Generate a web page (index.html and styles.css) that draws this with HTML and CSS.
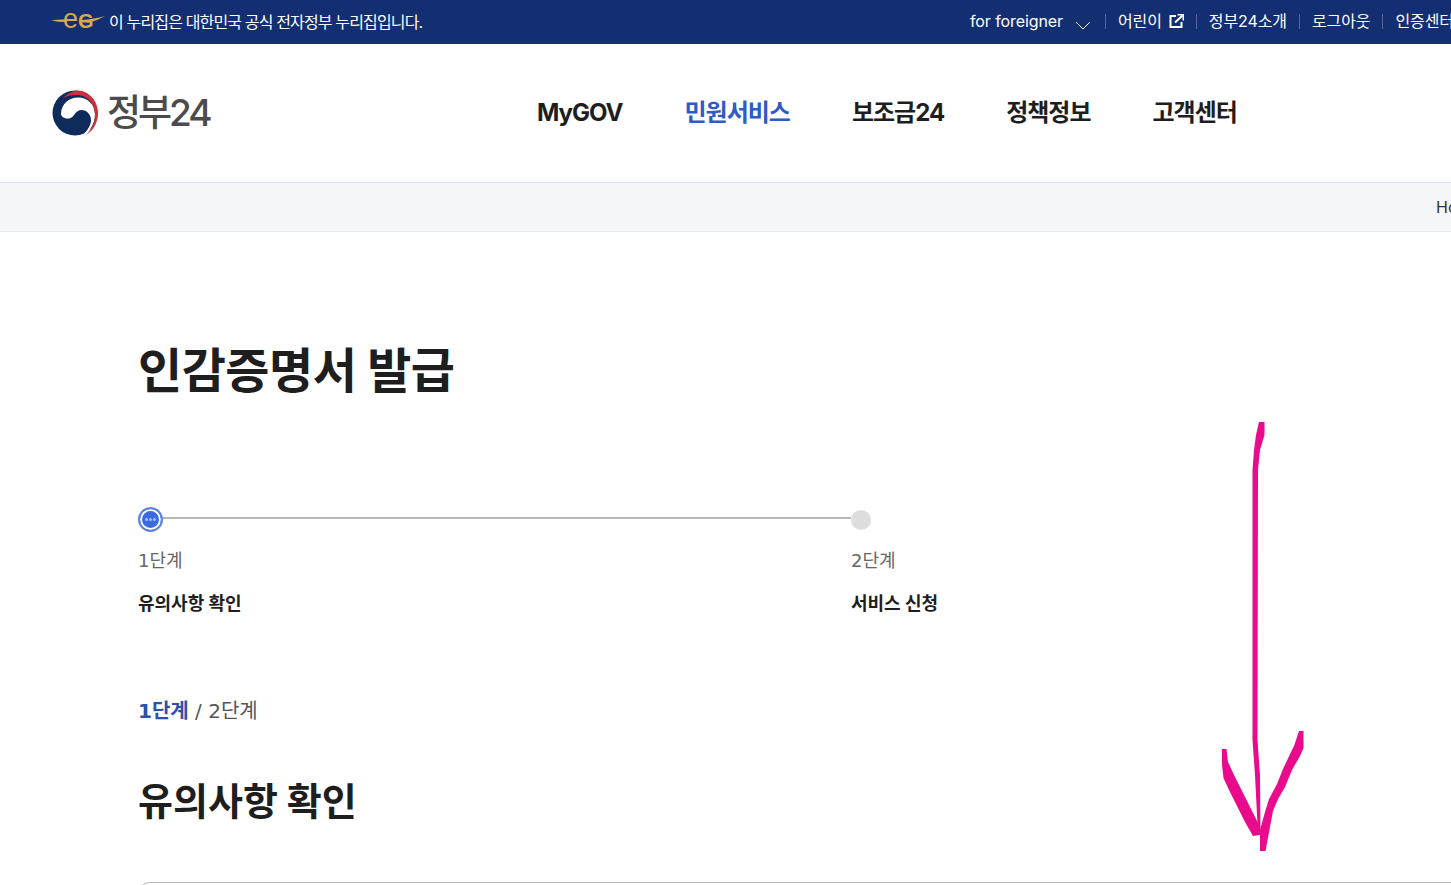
FILE: index.html
```html
<!DOCTYPE html>
<html lang="ko">
<head>
    <meta charset="UTF-8">
    <title>인감증명서 발급 | 정부24</title>
    <link rel="stylesheet" href="styles.css">
</head>
<body>
    <div class="top-bar">
        <div class="gov-notice">
            <svg class="eg-logo" width="54" height="20" viewBox="0 0 54 20">
                <path d="M0 9.500 Q8 8 16 8.500 L15 11 Q7 11 0 9.500Z" fill="#d8a94f"/>
                <path d="M30 9 Q44 8 54 5 Q46 10 38 11.500 L30 11.500Z" fill="#d8a94f"/>
                <text class="eg-text" x="12" y="17">e</text>
                <text class="eg-text eg-cap" x="27" y="17">G</text>
            </svg>
            <span>이 누리집은 대한민국 공식 전자정부 누리집입니다.</span>
        </div>
        <ul class="util-menu">
            <li class="foreigner">for foreigner
                <svg class="chevron" width="16" height="9" viewBox="0 0 16 9"><path d="M1 1l7 7 7-7" fill="none" stroke="#fff" stroke-width="1"/></svg>
            </li>
            <li>어린이
                <svg width="15" height="14" viewBox="0 0 15 14"><path d="M7 2H1.500v11h11V8" fill="none" stroke="#fff" stroke-width="2"/><path d="M6 8.500L13 2M8.500 .500h6v6" fill="none" stroke="#fff" stroke-width="2"/></svg>
            </li>
            <li>정부24소개</li>
            <li>로그아웃</li>
            <li>인증센터</li>
        </ul>
    </div>

    <header class="site-header">
        <a class="logo">
            <svg width="48" height="46" viewBox="0 0 48 46">
                <circle cx="24" cy="23" r="22.500" fill="#0f2b5b"/>
                <path d="M10 24C10 14 18 7.500 27 7.500 37 7.500 44 15 44 24 44 33 40 40 33 45L31 45.500C37 40 40 35 40 30 40 24 35 20 31 20 27 20 25 22 23 25 21 28 18 29 15 28.500 12 28 10 26 10 24Z" fill="#fff"/>
                <path d="M12 8C17 3 23 .5 27 .5 38 1 47 11 47 23 47 33 42 41 35 45 41 39 44 32 44 25 44 14 36 5 26 5 20 5 16 6 12 8Z" fill="#cd2e3a"/>
            </svg>
            <span class="logo-text">정부24</span>
        </a>
        <nav class="main-nav">
            <a>MyGOV</a>
            <a class="active">민원서비스</a>
            <a>보조금24</a>
            <a>정책정보</a>
            <a>고객센터</a>
        </nav>
    </header>

    <div class="breadcrumb">Home</div>

    <main class="content">
        <h1>인감증명서 발급</h1>

        <div class="steps">
            <div class="step">
                <div class="step-track">
                    <span class="dot current"><i></i><i></i><i></i></span>
                    <span class="track-line"></span>
                </div>
                <div class="step-num">1단계</div>
                <div class="step-name">유의사항 확인</div>
            </div>
            <div class="step">
                <div class="step-track">
                    <span class="dot"></span>
                </div>
                <div class="step-num">2단계</div>
                <div class="step-name">서비스 신청</div>
            </div>
        </div>

        <div class="step-count"><strong>1단계</strong> <span class="slash">/</span> 2단계</div>
        <h2>유의사항 확인</h2>
        <div class="notice-box"></div>
    </main>

    <!-- hand drawn marker arrow on top of the page -->
    <svg class="marker-arrow" width="1451" height="885" viewBox="0 0 1451 885">
        <path d="M1259 422H1264.500V435L1260 450 1258 470 1257.500 740 1260 775 1260.500 835H1258L1255 775 1252.500 740V470L1254 450 1256 435Z" fill="#ea0b8c"/>
        <path d="M1222 749H1226.500L1228 762 1234 775 1259 825V835L1253 836 1245 822 1229 790 1223.500 778 1222 765Z" fill="#ea0b8c"/>
        <path d="M1299 731h4.500v17l-3.500 8-8 14-7 17-7 12-5 12-3 16-4.500 24h-5.500v-21l5-18 4-13 8-15 6-15 8-17 3-6Z" fill="#ea0b8c"/>
    </svg>
</body>
</html>
```

FILE: styles.css
```css
* {
    box-sizing: border-box;
}
html, body {
    margin: 0;
    padding: 0;
    height: 885px;
    overflow: hidden;
}
body {
    position: relative;
    font-family: Inter, "Noto Sans CJK KR", sans-serif;
    color: #1e1e1e;
    background-color: #fff;
}
.top-bar {
    display: flex;
    align-items: center;
    height: 44px;
    padding: 0 0 2px 51px;
    background-color: #132f71;
    color: #fff;
    font-size: 16px;
    white-space: nowrap;
    overflow: hidden;
}
.gov-notice {
    display: flex;
    align-items: center;
    flex: 0 0 919px;
    gap: 4px;
    letter-spacing: -0.85px;
}
.eg-logo {
    flex: none;
    overflow: visible;
}
.eg-text {
    font-family: "Liberation Sans", sans-serif;
    font-size: 27px;
    letter-spacing: 0;
    fill: #d8a94f;
}
.eg-cap {
    font-size: 20px;
    font-weight: 700;
}
.util-menu {
    display: flex;
    align-items: center;
    flex: none;
    margin: 0;
    padding: 0;
    list-style: none;
    letter-spacing: -0.1px;
}
.util-menu li {
    display: flex;
    align-items: center;
    gap: 7px;
    padding: 0 12px;
    border-left: 1px solid #54689b;
    line-height: 15px;
}
.util-menu li.foreigner {
    gap: 12px;
    padding-left: 0;
    padding-right: 14px;
    border-left: none;
}
.chevron {
    margin-top: 8px;
}
.site-header {
    display: flex;
    align-items: center;
    height: 139px;
    padding-left: 51px;
    border-bottom: 1px solid #e1e3e8;
}
.logo {
    display: flex;
    align-items: center;
    gap: 8px;
    width: 486px;
}
.logo-text {
    margin-top: -6px;
    font-size: 37px;
    font-weight: 500;
    letter-spacing: -3px;
    color: #4b4b4b;
}
.main-nav {
    display: flex;
    align-items: baseline;
    gap: 62px;
    font-size: 24px;
    font-weight: 700;
    line-height: 36px;
    letter-spacing: -1px;
}
.main-nav .active {
    color: #2f5bc4;
}
.breadcrumb {
    height: 49px;
    padding-left: 1436px;
    border-bottom: 1px solid #e8eaef;
    background-color: #f4f6fa;
    font-size: 16px;
    line-height: 48px;
    color: #333;
    white-space: nowrap;
    overflow: hidden;
}
.content {
    height: 653px;
    padding: 103px 0 0 138px;
    overflow: hidden;
}
h1 {
    margin: 0;
    font-size: 48px;
    font-weight: 700;
    line-height: 72px;
    letter-spacing: -0.5px;
}
.steps {
    display: flex;
    margin-top: 99px;
}
.step {
    flex: none;
    width: 713px;
}
.step-track {
    display: flex;
    align-items: center;
    height: 26px;
}
.dot {
    flex: none;
    width: 20px;
    height: 20px;
    margin-top: 2px;
    border-radius: 50%;
    background-color: #ddd;
}
.dot.current {
    display: flex;
    align-items: center;
    justify-content: center;
    gap: 1px;
    width: 25px;
    height: 25px;
    margin-top: 0;
    border: 2px solid #5d83e6;
    box-shadow: inset 0 0 0 2px #fff;
    background-color: #3b6ae0;
}
.dot.current i {
    width: 3px;
    height: 3px;
    border-radius: 50%;
    background-color: #a9bdf2;
}
.track-line {
    flex: 1;
    height: 2px;
    margin-top: -2px;
    background-color: #b8b8b8;
}
.step-num {
    margin-top: 15px;
    font-family: "DejaVu Sans", "Noto Sans CJK KR", sans-serif;
    font-size: 18px;
    line-height: 27px;
    color: #666;
}
.step-name {
    margin-top: 16px;
    font-size: 18px;
    font-weight: 700;
    line-height: 27px;
    color: #1e1e1e;
}
.step-count {
    margin-top: 79px;
    font-family: "DejaVu Sans", "Noto Sans CJK KR", sans-serif;
    font-size: 20px;
    line-height: 30px;
    color: #555;
}
.step-count strong {
    color: #2a52a8;
    font-weight: 700;
}
h2 {
    margin: 45px 0 0;
    font-size: 38px;
    font-weight: 700;
    line-height: 60px;
}
.notice-box {
    height: 60px;
    margin-top: 51px;
    border: 1px solid #b8b8b8;
    border-right: none;
    border-radius: 12px 0 0 0;
}
.marker-arrow {
    position: absolute;
    top: 0;
    left: 0;
    pointer-events: none;
}
```
